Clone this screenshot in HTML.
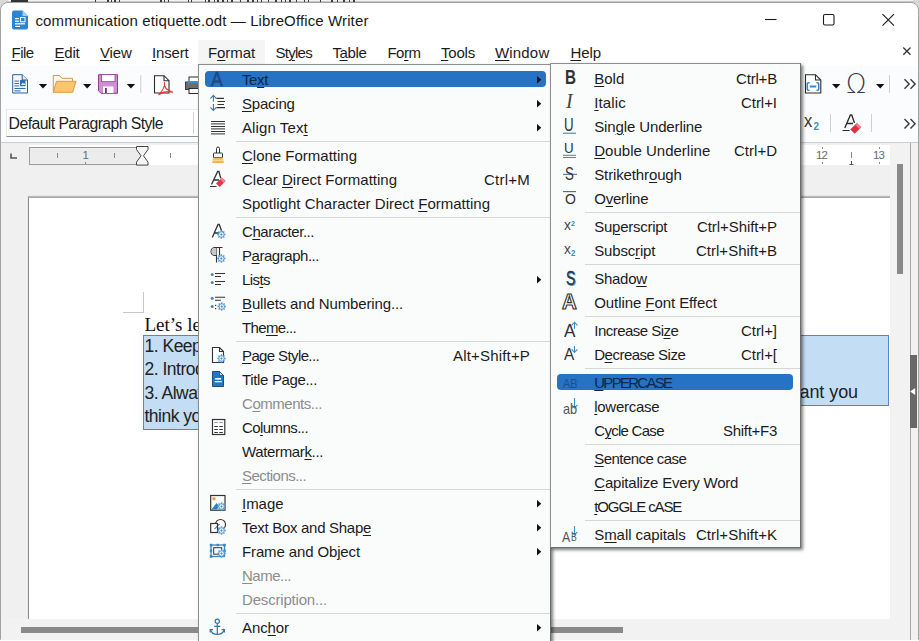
<!DOCTYPE html>
<html><head><meta charset="utf-8"><title>communication etiquette.odt — LibreOffice Writer</title>
<style>
html,body{margin:0;padding:0;}
body{width:919px;height:641px;overflow:hidden;position:relative;background:#fff;font-family:"Liberation Sans",sans-serif;}
.t{position:absolute;white-space:pre;display:inline-block;}
.t u{text-decoration:underline;text-decoration-thickness:1px;text-underline-offset:2px;}
svg{position:absolute;left:0;top:0;overflow:visible}
#win{position:absolute;left:0;top:2px;width:919px;height:638px;box-sizing:border-box;border:1px solid #a2a2a2;border-radius:8px 8px 0 0;background:#fff;overflow:hidden}
</style></head><body>

<div style="position:absolute;left:0px;top:0px;width:919px;height:10px;background:#d9d9d9;"></div>
<div style="position:absolute;left:8px;top:0px;width:905px;height:2px;background:#f4f4f4;"></div>
<div style="position:absolute;left:6px;top:1px;width:909px;height:1px;background:#c8c8c8;"></div>
<div style="position:absolute;left:11px;top:0px;width:17px;height:2px;background:#333;"></div>
<div style="position:absolute;left:95px;top:0px;width:1px;height:2px;background:#3a3a3a;"></div>
<div style="position:absolute;left:107px;top:0px;width:2px;height:2px;background:#3a3a3a;"></div>
<div style="position:absolute;left:111px;top:0px;width:1px;height:2px;background:#3a3a3a;"></div>
<div style="position:absolute;left:114px;top:0px;width:2px;height:2px;background:#3a3a3a;"></div>
<div style="position:absolute;left:119px;top:0px;width:1px;height:2px;background:#3a3a3a;"></div>
<div style="position:absolute;left:160px;top:0px;width:2px;height:2px;background:#3a3a3a;"></div>
<div style="position:absolute;left:164px;top:0px;width:1px;height:2px;background:#3a3a3a;"></div>
<div style="position:absolute;left:168px;top:0px;width:1px;height:2px;background:#3a3a3a;"></div>
<div style="position:absolute;left:188px;top:0px;width:1px;height:2px;background:#3a3a3a;"></div>
<div style="position:absolute;left:191px;top:0px;width:1px;height:2px;background:#3a3a3a;"></div>
<div style="position:absolute;left:205px;top:0px;width:1px;height:2px;background:#3a3a3a;"></div>
<div style="position:absolute;left:208px;top:0px;width:2px;height:2px;background:#3a3a3a;"></div>
<div style="position:absolute;left:214px;top:0px;width:1px;height:2px;background:#3a3a3a;"></div>
<div style="position:absolute;left:217px;top:0px;width:2px;height:2px;background:#3a3a3a;"></div>
<div style="position:absolute;left:222px;top:0px;width:2px;height:2px;background:#3a3a3a;"></div>
<div style="position:absolute;left:227px;top:0px;width:1px;height:2px;background:#3a3a3a;"></div>
<div style="position:absolute;left:231px;top:0px;width:2px;height:2px;background:#3a3a3a;"></div>
<div style="position:absolute;left:240px;top:0px;width:1px;height:2px;background:#3a3a3a;"></div>
<div style="position:absolute;left:247px;top:0px;width:2px;height:2px;background:#3a3a3a;"></div>
<div style="position:absolute;left:252px;top:0px;width:2px;height:2px;background:#3a3a3a;"></div>
<div style="position:absolute;left:257px;top:0px;width:1px;height:2px;background:#3a3a3a;"></div>
<div style="position:absolute;left:261px;top:0px;width:1px;height:2px;background:#3a3a3a;"></div>
<div style="position:absolute;left:268px;top:0px;width:1px;height:2px;background:#3a3a3a;"></div>
<div style="position:absolute;left:275px;top:0px;width:2px;height:2px;background:#3a3a3a;"></div>
<div style="position:absolute;left:281px;top:0px;width:1px;height:2px;background:#3a3a3a;"></div>
<div style="position:absolute;left:285px;top:0px;width:1px;height:2px;background:#3a3a3a;"></div>
<div style="position:absolute;left:289px;top:0px;width:2px;height:2px;background:#3a3a3a;"></div>
<div style="position:absolute;left:296px;top:0px;width:1px;height:2px;background:#3a3a3a;"></div>
<div style="position:absolute;left:304px;top:0px;width:1px;height:2px;background:#3a3a3a;"></div>
<div style="position:absolute;left:308px;top:0px;width:1px;height:2px;background:#3a3a3a;"></div>
<div style="position:absolute;left:320px;top:0px;width:1px;height:2px;background:#3a3a3a;"></div>
<div style="position:absolute;left:331px;top:0px;width:2px;height:2px;background:#3a3a3a;"></div>
<div style="position:absolute;left:337px;top:0px;width:1px;height:2px;background:#3a3a3a;"></div>
<div style="position:absolute;left:343px;top:0px;width:2px;height:2px;background:#3a3a3a;"></div>
<div style="position:absolute;left:349px;top:0px;width:1px;height:2px;background:#3a3a3a;"></div>
<div style="position:absolute;left:353px;top:0px;width:2px;height:2px;background:#3a3a3a;"></div>
<div id="win"></div>
<span class="t" id="t1" style="left:35.5px;top:10.30px;font:normal 400 15px/21px 'Liberation Sans',sans-serif;color:#1a1a1a;letter-spacing:0.123px;">communication etiquette.odt — LibreOffice Writer</span>
<div style="position:absolute;left:198px;top:40px;width:67px;height:25px;background:#f5f5f5;"></div>
<span class="t" id="t2" style="left:11.5px;top:41.90px;font:normal 400 15px/21px 'Liberation Sans',sans-serif;color:#1c1c1c;letter-spacing:-0.547px;"><u>F</u>ile</span>
<span class="t" id="t3" style="left:54.4px;top:41.90px;font:normal 400 15px/21px 'Liberation Sans',sans-serif;color:#1c1c1c;letter-spacing:-0.165px;"><u>E</u>dit</span>
<span class="t" id="t4" style="left:100px;top:41.90px;font:normal 400 15px/21px 'Liberation Sans',sans-serif;color:#1c1c1c;letter-spacing:-0.163px;"><u>V</u>iew</span>
<span class="t" id="t5" style="left:152px;top:41.90px;font:normal 400 15px/21px 'Liberation Sans',sans-serif;color:#1c1c1c;letter-spacing:-0.172px;"><u>I</u>nsert</span>
<span class="t" id="t6" style="left:208px;top:41.90px;font:normal 400 15px/21px 'Liberation Sans',sans-serif;color:#1c1c1c;letter-spacing:-0.086px;">F<u>o</u>rmat</span>
<span class="t" id="t7" style="left:275.4px;top:41.90px;font:normal 400 15px/21px 'Liberation Sans',sans-serif;color:#1c1c1c;letter-spacing:-0.712px;">St<u>y</u>les</span>
<span class="t" id="t8" style="left:332.4px;top:41.90px;font:normal 400 15px/21px 'Liberation Sans',sans-serif;color:#1c1c1c;letter-spacing:-0.355px;">T<u>a</u>ble</span>
<span class="t" id="t9" style="left:387.4px;top:41.90px;font:normal 400 15px/21px 'Liberation Sans',sans-serif;color:#1c1c1c;letter-spacing:-0.504px;">Fo<u>r</u>m</span>
<span class="t" id="t10" style="left:441px;top:41.90px;font:normal 400 15px/21px 'Liberation Sans',sans-serif;color:#1c1c1c;letter-spacing:-0.206px;"><u>T</u>ools</span>
<span class="t" id="t11" style="left:495px;top:41.90px;font:normal 400 15px/21px 'Liberation Sans',sans-serif;color:#1c1c1c;letter-spacing:0.171px;"><u>W</u>indow</span>
<span class="t" id="t12" style="left:570.4px;top:41.90px;font:normal 400 15px/21px 'Liberation Sans',sans-serif;color:#1c1c1c;letter-spacing:-0.069px;"><u>H</u>elp</span>
<div style="position:absolute;left:1px;top:66px;width:917px;height:77px;background:#fbfcfd;"></div>
<div style="position:absolute;left:1px;top:142px;width:917px;height:1px;background:#cdcdcd;"></div>
<div style="position:absolute;left:6px;top:109px;width:194px;height:27.5px;background:#fff;border-bottom:1px solid #8f8f8f;border-left:1px solid #e6e6e6;border-top:1px solid #ececec;box-sizing:border-box;"></div>
<div style="position:absolute;left:193px;top:112px;width:1px;height:22px;background:#d0d0d0;"></div>
<span class="t" id="t13" style="left:8.6px;top:113.13px;font:normal 400 15.8px/22px 'Liberation Sans',sans-serif;color:#1c1c1c;letter-spacing:-0.579px;">Default Paragraph Style</span>
<div style="position:absolute;left:1px;top:143px;width:909px;height:497px;background:#f0f0f0;"></div>
<div style="position:absolute;left:29px;top:145px;width:861px;height:20px;background:#fff;"></div>
<div style="position:absolute;left:29px;top:147px;width:114px;height:18px;background:#ececec;border:1px solid #9a9a9a;box-sizing:border-box;"></div>
<span class="t" id="t14" style="left:82.5px;top:147.02px;font:normal 400 11.5px/16px 'Liberation Sans',sans-serif;color:#6a6a6a;letter-spacing:-0.406px;">1</span>
<span class="t" id="t15" style="left:816px;top:147.02px;font:normal 400 11.5px/16px 'Liberation Sans',sans-serif;color:#6a6a6a;letter-spacing:-0.898px;">12</span>
<span class="t" id="t16" style="left:873px;top:147.02px;font:normal 400 11.5px/16px 'Liberation Sans',sans-serif;color:#6a6a6a;letter-spacing:-0.898px;">13</span>
<div style="position:absolute;left:28px;top:197px;width:862px;height:422px;background:#fff;border-left:1px solid #8c8c8c;border-top:1px solid #a8a8a8;box-sizing:border-box;box-shadow:0 -1px 1px rgba(0,0,0,.22);"></div>
<div style="position:absolute;left:123px;top:312px;width:21px;height:1px;background:#c8c8c8;"></div>
<div style="position:absolute;left:143px;top:292px;width:1px;height:21px;background:#c8c8c8;"></div>
<div style="position:absolute;left:143px;top:335px;width:746px;height:71px;background:#c3ddf4;border:1px solid #5686bd;box-sizing:border-box;border-bottom:none"></div>
<div style="position:absolute;left:143px;top:405px;width:500px;height:25px;background:#c3ddf4;border:1px solid #5686bd;box-sizing:border-box;border-top:none"></div>
<div style="position:absolute;left:642px;top:405px;width:247px;height:1px;background:#5686bd;"></div>
<span class="t" id="t17" style="left:144.5px;top:311.09px;font:normal 400 19px/27px 'Liberation Serif',serif;color:#111;letter-spacing:0.000px;">Let’s learn about communication etiquette</span>
<span class="t" id="t18" style="left:144.5px;top:333.94px;font:normal 400 17.5px/24px 'Liberation Sans',sans-serif;color:#222;letter-spacing:0.000px;letter-spacing:-0.5px;">1. Keep your message short and clear</span>
<span class="t" id="t19" style="left:144.5px;top:357.24px;font:normal 400 17.5px/24px 'Liberation Sans',sans-serif;color:#222;letter-spacing:0.000px;letter-spacing:-0.5px;">2. Introduce yourself at the beginning</span>
<span class="t" id="t20" style="left:144.5px;top:381.14px;font:normal 400 17.5px/24px 'Liberation Sans',sans-serif;color:#222;letter-spacing:0.000px;letter-spacing:-0.5px;">3. Always</span>
<span class="t" id="t21" style="left:799.5px;top:380.46px;font:normal 400 18px/25px 'Liberation Sans',sans-serif;color:#222;letter-spacing:-0.078px;">ant you</span>
<span class="t" id="t22" style="left:144.5px;top:404.14px;font:normal 400 17.5px/24px 'Liberation Sans',sans-serif;color:#222;letter-spacing:0.000px;letter-spacing:-0.5px;">think you should</span>
<div style="position:absolute;left:890px;top:143px;width:20px;height:477px;background:#f2f2f2;"></div>
<div style="position:absolute;left:897px;top:164px;width:6px;height:110px;background:#8a8a8a;"></div>
<div style="position:absolute;left:1px;top:619px;width:909px;height:21px;background:#f2f2f2;"></div>
<div style="position:absolute;left:21px;top:627px;width:601.5px;height:5.6px;background:#8a8a8a;"></div>
<div style="position:absolute;left:910px;top:143px;width:1px;height:497px;background:#a9a9a9;"></div>
<div style="position:absolute;left:911px;top:143px;width:7px;height:497px;background:#f1f1f1;"></div>
<div style="position:absolute;left:910px;top:355px;width:7px;height:73px;background:#686868;"></div>
<svg width="919" height="641" viewBox="0 0 919 641">
<path d="M14 10.5h8.5l5.5 5.5v11.5a2 2 0 0 1-2 2h-12a2 2 0 0 1-2-2v-15a2 2 0 0 1 2-2z" fill="#2a85d0"/><path d="M22.5 10.5l5.500 5.500h-5.500z" fill="#9fd0f5"/>
<g fill="#fff"><rect x="15" y="18" width="4" height="1.2"/><rect x="15" y="20.6" width="4" height="1.2"/><rect x="15" y="23.2" width="10" height="1.2"/><rect x="15" y="25.8" width="5" height="1.2"/><rect x="20.5" y="17.5" width="4.500" height="4.300" fill="none" stroke="#fff" stroke-width="1"/></g>
<g stroke="#1a1a1a" stroke-width="1.1" fill="none"><path d="M765 19.5h11.500"/><rect x="823.5" y="14.5" width="10.5" height="10.5" rx="1.5"/><path d="M882.5 14.200l11.500 11.500M894 14.200l-11.500 11.500"/></g>
<path d="M903.300 47.500l7.200 7.200M910.500 47.500l-7.200 7.200" stroke="#333" stroke-width="1.300" fill="none"/>
<path d="M12.700 74.700h9.500l5.300 5.300v13h-14.800z" fill="#f2f8fd" stroke="#2d5f9e" stroke-width="1"/><path d="M22.200 74.700v5.300h5.300" fill="#dcecf9" stroke="#2d5f9e" stroke-width="1"/>
<g fill="#2d6fb5"><rect x="14.500" y="80.600" width="4.500" height="1"/><rect x="14.500" y="83" width="4.500" height="1"/><rect x="14.500" y="85.400" width="4.500" height="1"/><rect x="14.500" y="88" width="11" height="1"/><rect x="14.500" y="90.400" width="6" height="1"/><rect x="20" y="80" width="5.500" height="6.200"/></g><path d="M21 85l1.800-2.500l1 1.200l0.800-0.800l0.500 2.100z" fill="#d7ebfa"/>
<path d="M38.8 84h8.400l-4.200 4.500z" fill="#111"/>
<path d="M83 84h8.400l-4.200 4.500z" fill="#111"/>
<path d="M126.7 84h8.400l-4.200 4.500z" fill="#111"/>
<path d="M832 84h8.400l-4.200 4.500z" fill="#111"/>
<path d="M876 84h8.400l-4.200 4.500z" fill="#111"/>
<path d="M53.300 92.300v-16.800h6.200l2.400 2.800h10.600v3" fill="#fff6e6" stroke="#c99a62" stroke-width="1"/><path d="M53.300 92.300l3.200-11h19.500l-3.300 11z" fill="#f9c86c" stroke="#d79a4a" stroke-width="1"/>
<path d="M98.500 74.700h19v18.600h-16.500l-2.500-2.500z" fill="#d390d1" stroke="#8c3f8e" stroke-width="1"/><rect x="101.500" y="74.700" width="13.500" height="7" fill="#fff" stroke="#8c3f8e" stroke-width="0.800"/><rect x="103" y="86.500" width="10.500" height="6.500" fill="#fff"/><rect x="105" y="88" width="1.800" height="5" fill="#6d2c6f"/>
<path d="M140.800 75v18M889.500 75v18M830.500 114v18M871.500 114v18" stroke="#cfcfcf" stroke-width="1"/>
<path d="M154.500 75.700h9.500l5 5v12.300h-14.500z" fill="#fff" stroke="#2b2b2b" stroke-width="1.100"/><path d="M164 75.700v5h5" fill="none" stroke="#2b2b2b" stroke-width="1.100"/>
<path d="M164.500 82.500c0.900 3.500-1 7-5.700 12.200M164.500 82.500c-0.700 4 2.200 7.800 8 9.600M158.800 94.700c3.500-2.600 8.500-3.600 13.700-2.600" fill="none" stroke="#e03a3a" stroke-width="1.100" stroke-linecap="round"/>
<rect x="189" y="77" width="12" height="7" fill="#fff" stroke="#2b2b2b"/><rect x="185.500" y="82" width="16" height="7.500" fill="#6d6d6d" stroke="#3a3a3a"/><rect x="187.500" y="81" width="13" height="2.200" fill="#3a8dd6"/><rect x="189" y="88.500" width="12" height="5" fill="#fff" stroke="#2b2b2b"/>
<path d="M805.500 74.700h10l5.300 5.300v13h-15.300z" fill="#fff" stroke="#2b2b2b" stroke-width="1.100"/><path d="M815.500 74.700v5.300h5.300" fill="none" stroke="#2b2b2b" stroke-width="1.100"/><path d="M809.500 82.800h-1.200a1 1 0 0 0-1 1v5.400a1 1 0 0 0 1 1h1.200M816.500 82.800h1.200a1 1 0 0 1 1 1v5.400a1 1 0 0 1-1 1h-1.200" fill="none" stroke="#2f86d1" stroke-width="1.500"/><rect x="809.800" y="85.500" width="6.400" height="2" fill="#2f86d1"/>
<path d="M904.500 79.2l4.600 4.800l-4.600 4.800M910.500 79.2l4.600 4.800l-4.600 4.800" fill="none" stroke="#3a3a3a" stroke-width="1.400"/>
<path d="M904.500 119l4.600 4.800l-4.600 4.800M910.500 119l4.600 4.800l-4.600 4.800" fill="none" stroke="#3a3a3a" stroke-width="1.400"/>
<path d="M844.800 128l5.600-13h1.300l2.800 8M847.200 123.500h5.800" fill="none" stroke="#2b2b2b" stroke-width="1.300"/><path d="M842.500 130.500h7" stroke="#2b2b2b" stroke-width="1"/><path d="M850.300 129.500l6.500-6.500l4.400 4.300l-6.500 6.500z" fill="#e0303f"/><path d="M855 124.800l1.800-1.800l4.400 4.300l-1.800 1.800z" fill="#ee7a85"/>
<g stroke="#8a8a8a" stroke-width="1"><path d="M57.500 153v5M114.500 153v5M170.500 153v5"/><path d="M822.500 147v2M822.500 162v2M879.500 147v2M879.500 162v2M85.500 162v2"/><path d="M851.500 152v6"/><path d="M851.500 161v4M849.500 164.500h4" stroke="#555"/></g>
<path d="M11 153.500v4.500h6" fill="none" stroke="#555" stroke-width="1.600"/>
<path d="M136.500 146.500h11.500v3l-4.500 6.300l4.500 6.300v3h-11.500v-3l4.500-6.300l-4.500-6.300z" fill="#f4f4f4" stroke="#444" stroke-width="1"/>
<path d="M915.200 388l-5 3.500l5 3.500z" fill="#fff"/>
</svg>
<span class="t" id="t23" style="left:846.3px;top:65.24px;font:normal 200 27px/38px 'Liberation Sans',sans-serif;color:#3a3a3a;letter-spacing:0.000px;font-family:'DejaVu Sans Light','DejaVu Sans',sans-serif;transform:scaleX(0.98);transform-origin:0 0;">Ω</span>
<span class="t" id="t24" style="left:804px;top:109.06px;font:normal 400 18px/25px 'Liberation Sans',sans-serif;color:#333;letter-spacing:0.000px;transform:scaleX(0.92);transform-origin:0 0;">x</span>
<span class="t" id="t25" style="left:813.5px;top:120.34px;font:normal 700 10px/14px 'Liberation Sans',sans-serif;color:#3f8dc4;letter-spacing:0.000px;">2</span>
<div style="position:absolute;left:198px;top:64px;width:353px;height:600px;box-sizing:border-box;background:#fafbfb;border:1px solid #8e8e8e;border-right-color:#6c6c6c;border-bottom-color:#6c6c6c;box-shadow:2px 2px 3px rgba(0,0,0,.5);"></div>
<div style="position:absolute;left:204.6px;top:71px;width:341.0px;height:15.5px;background:#2672c4;border-radius:4px;"></div>
<span class="t" id="t26" style="left:242px;top:69.05px;font:normal 400 15px/21px 'Liberation Sans',sans-serif;color:#0f2646;letter-spacing:-0.379px;">Te<u>x</u>t</span>
<svg width="919" height="641"><path d="M537 75.9l4.300 3.800l-4.300 3.800z" fill="#111"/></svg>
<span class="t" id="t27" style="left:242px;top:93.05px;font:normal 400 15px/21px 'Liberation Sans',sans-serif;color:#1c1c1c;letter-spacing:-0.210px;"><u>S</u>pacing</span>
<svg width="919" height="641"><path d="M537 99.9l4.300 3.800l-4.300 3.800z" fill="#111"/></svg>
<span class="t" id="t28" style="left:242px;top:117.05px;font:normal 400 15px/21px 'Liberation Sans',sans-serif;color:#1c1c1c;letter-spacing:0.098px;">Align Tex<u>t</u></span>
<svg width="919" height="641"><path d="M537 123.9l4.300 3.800l-4.300 3.800z" fill="#111"/></svg>
<div style="position:absolute;left:236px;top:141px;width:314px;height:1px;background:#d6d6d6;"></div>
<span class="t" id="t29" style="left:242px;top:145.05px;font:normal 400 15px/21px 'Liberation Sans',sans-serif;color:#1c1c1c;letter-spacing:-0.004px;"><u>C</u>lone Formatting</span>
<span class="t" id="t30" style="left:242px;top:169.05px;font:normal 400 15px/21px 'Liberation Sans',sans-serif;color:#1c1c1c;letter-spacing:-0.003px;">Clear <u>D</u>irect Formatting</span>
<span class="t" id="t31" style="left:484px;top:169.05px;font:normal 400 15px/21px 'Liberation Sans',sans-serif;color:#1c1c1c;letter-spacing:0.234px;">Ctrl+M</span>
<span class="t" id="t32" style="left:242px;top:193.05px;font:normal 400 15px/21px 'Liberation Sans',sans-serif;color:#1c1c1c;letter-spacing:0.011px;">Spotlight Character Direct <u>F</u>ormatting</span>
<div style="position:absolute;left:236px;top:217px;width:314px;height:1px;background:#d6d6d6;"></div>
<span class="t" id="t33" style="left:242px;top:221.05px;font:normal 400 15px/21px 'Liberation Sans',sans-serif;color:#1c1c1c;letter-spacing:-0.462px;">C<u>h</u>aracter...</span>
<span class="t" id="t34" style="left:242px;top:245.05px;font:normal 400 15px/21px 'Liberation Sans',sans-serif;color:#1c1c1c;letter-spacing:-0.465px;">P<u>a</u>ragraph...</span>
<span class="t" id="t35" style="left:242px;top:269.05px;font:normal 400 15px/21px 'Liberation Sans',sans-serif;color:#1c1c1c;letter-spacing:-0.572px;">Lis<u>t</u>s</span>
<svg width="919" height="641"><path d="M537 275.9l4.300 3.800l-4.300 3.800z" fill="#111"/></svg>
<span class="t" id="t36" style="left:242px;top:293.05px;font:normal 400 15px/21px 'Liberation Sans',sans-serif;color:#1c1c1c;letter-spacing:-0.136px;"><u>B</u>ullets and Numbering...</span>
<span class="t" id="t37" style="left:242px;top:317.05px;font:normal 400 15px/21px 'Liberation Sans',sans-serif;color:#1c1c1c;letter-spacing:-0.652px;">The<u>m</u>e...</span>
<div style="position:absolute;left:236px;top:341px;width:314px;height:1px;background:#d6d6d6;"></div>
<span class="t" id="t38" style="left:242px;top:345.05px;font:normal 400 15px/21px 'Liberation Sans',sans-serif;color:#1c1c1c;letter-spacing:-0.620px;"><u>P</u>age Style...</span>
<span class="t" id="t39" style="left:453px;top:345.05px;font:normal 400 15px/21px 'Liberation Sans',sans-serif;color:#1c1c1c;letter-spacing:0.178px;">Alt+Shift+P</span>
<span class="t" id="t40" style="left:242px;top:369.05px;font:normal 400 15px/21px 'Liberation Sans',sans-serif;color:#1c1c1c;letter-spacing:-0.345px;">Title Page...</span>
<span class="t" id="t41" style="left:242px;top:393.05px;font:normal 400 15px/21px 'Liberation Sans',sans-serif;color:#8d8d8d;letter-spacing:-0.459px;">C<u>o</u>mments...</span>
<span class="t" id="t42" style="left:242px;top:417.05px;font:normal 400 15px/21px 'Liberation Sans',sans-serif;color:#1c1c1c;letter-spacing:-0.572px;">Co<u>l</u>umns...</span>
<span class="t" id="t43" style="left:242px;top:441.05px;font:normal 400 15px/21px 'Liberation Sans',sans-serif;color:#1c1c1c;letter-spacing:-0.358px;">Watermar<u>k</u>...</span>
<span class="t" id="t44" style="left:242px;top:465.05px;font:normal 400 15px/21px 'Liberation Sans',sans-serif;color:#8d8d8d;letter-spacing:-0.550px;"><u>S</u>ections...</span>
<div style="position:absolute;left:236px;top:489px;width:314px;height:1px;background:#d6d6d6;"></div>
<span class="t" id="t45" style="left:242px;top:493.05px;font:normal 400 15px/21px 'Liberation Sans',sans-serif;color:#1c1c1c;letter-spacing:-0.041px;"><u>I</u>mage</span>
<svg width="919" height="641"><path d="M537 499.9l4.300 3.800l-4.300 3.800z" fill="#111"/></svg>
<span class="t" id="t46" style="left:242px;top:517.05px;font:normal 400 15px/21px 'Liberation Sans',sans-serif;color:#1c1c1c;letter-spacing:-0.293px;">Text Box and Shap<u>e</u></span>
<svg width="919" height="641"><path d="M537 523.9l4.300 3.800l-4.300 3.800z" fill="#111"/></svg>
<span class="t" id="t47" style="left:242px;top:541.05px;font:normal 400 15px/21px 'Liberation Sans',sans-serif;color:#1c1c1c;letter-spacing:-0.130px;">Frame and Ob<u>j</u>ect</span>
<svg width="919" height="641"><path d="M537 547.9l4.300 3.800l-4.300 3.800z" fill="#111"/></svg>
<span class="t" id="t48" style="left:242px;top:565.05px;font:normal 400 15px/21px 'Liberation Sans',sans-serif;color:#8d8d8d;letter-spacing:-0.504px;"><u>N</u>ame...</span>
<span class="t" id="t49" style="left:242px;top:589.05px;font:normal 400 15px/21px 'Liberation Sans',sans-serif;color:#8d8d8d;letter-spacing:-0.182px;">Description...</span>
<div style="position:absolute;left:236px;top:613px;width:314px;height:1px;background:#d6d6d6;"></div>
<span class="t" id="t50" style="left:242px;top:617.05px;font:normal 400 15px/21px 'Liberation Sans',sans-serif;color:#1c1c1c;letter-spacing:-0.091px;">Anc<u>h</u>or</span>
<svg width="919" height="641"><path d="M537 623.9l4.300 3.800l-4.300 3.800z" fill="#111"/></svg>
<div style="position:absolute;left:550px;top:63px;width:251px;height:485px;box-sizing:border-box;background:#fafbfb;border:1px solid #8e8e8e;border-right-color:#6c6c6c;border-bottom-color:#6c6c6c;box-shadow:2px 2px 3px rgba(0,0,0,.5);"></div>
<span class="t" id="t51" style="left:594.25px;top:68.05px;font:normal 400 15px/21px 'Liberation Sans',sans-serif;color:#1c1c1c;letter-spacing:-0.012px;"><u>B</u>old</span>
<span class="t" id="t52" style="left:736px;top:68.05px;font:normal 400 15px/21px 'Liberation Sans',sans-serif;color:#1c1c1c;letter-spacing:-0.182px;">Ctrl+B</span>
<span class="t" id="t53" style="left:594.25px;top:92.05px;font:normal 400 15px/21px 'Liberation Sans',sans-serif;color:#1c1c1c;letter-spacing:0.107px;"><u>I</u>talic</span>
<span class="t" id="t54" style="left:741px;top:92.05px;font:normal 400 15px/21px 'Liberation Sans',sans-serif;color:#1c1c1c;letter-spacing:-0.044px;">Ctrl+I</span>
<span class="t" id="t55" style="left:594.25px;top:116.05px;font:normal 400 15px/21px 'Liberation Sans',sans-serif;color:#1c1c1c;letter-spacing:-0.130px;">Sin<u>g</u>le Underline</span>
<span class="t" id="t56" style="left:594.25px;top:140.05px;font:normal 400 15px/21px 'Liberation Sans',sans-serif;color:#1c1c1c;letter-spacing:0.005px;"><u>D</u>ouble Underline</span>
<span class="t" id="t57" style="left:734px;top:140.05px;font:normal 400 15px/21px 'Liberation Sans',sans-serif;color:#1c1c1c;letter-spacing:0.013px;">Ctrl+D</span>
<span class="t" id="t58" style="left:594.25px;top:164.05px;font:normal 400 15px/21px 'Liberation Sans',sans-serif;color:#1c1c1c;letter-spacing:-0.133px;">Strikethr<u>o</u>ugh</span>
<span class="t" id="t59" style="left:594.25px;top:188.05px;font:normal 400 15px/21px 'Liberation Sans',sans-serif;color:#1c1c1c;letter-spacing:-0.232px;">O<u>v</u>erline</span>
<div style="position:absolute;left:585px;top:212px;width:215px;height:1px;background:#d6d6d6;"></div>
<span class="t" id="t60" style="left:594.25px;top:216.05px;font:normal 400 15px/21px 'Liberation Sans',sans-serif;color:#1c1c1c;letter-spacing:-0.263px;">Su<u>p</u>erscript</span>
<span class="t" id="t61" style="left:697px;top:216.05px;font:normal 400 15px/21px 'Liberation Sans',sans-serif;color:#1c1c1c;letter-spacing:-0.073px;">Ctrl+Shift+P</span>
<span class="t" id="t62" style="left:594.25px;top:240.05px;font:normal 400 15px/21px 'Liberation Sans',sans-serif;color:#1c1c1c;letter-spacing:-0.172px;">Subsc<u>r</u>ipt</span>
<span class="t" id="t63" style="left:696px;top:240.05px;font:normal 400 15px/21px 'Liberation Sans',sans-serif;color:#1c1c1c;letter-spacing:0.010px;">Ctrl+Shift+B</span>
<div style="position:absolute;left:585px;top:264px;width:215px;height:1px;background:#d6d6d6;"></div>
<span class="t" id="t64" style="left:594.25px;top:268.05px;font:normal 400 15px/21px 'Liberation Sans',sans-serif;color:#1c1c1c;letter-spacing:-0.286px;">Shado<u>w</u></span>
<span class="t" id="t65" style="left:594.25px;top:292.05px;font:normal 400 15px/21px 'Liberation Sans',sans-serif;color:#1c1c1c;letter-spacing:-0.078px;">Outline <u>F</u>ont Effect</span>
<div style="position:absolute;left:585px;top:316px;width:215px;height:1px;background:#d6d6d6;"></div>
<span class="t" id="t66" style="left:594.25px;top:320.05px;font:normal 400 15px/21px 'Liberation Sans',sans-serif;color:#1c1c1c;letter-spacing:-0.530px;">Increase Si<u>z</u>e</span>
<span class="t" id="t67" style="left:741px;top:320.05px;font:normal 400 15px/21px 'Liberation Sans',sans-serif;color:#1c1c1c;letter-spacing:-0.044px;">Ctrl+]</span>
<span class="t" id="t68" style="left:594.25px;top:344.05px;font:normal 400 15px/21px 'Liberation Sans',sans-serif;color:#1c1c1c;letter-spacing:-0.505px;">D<u>e</u>crease Size</span>
<span class="t" id="t69" style="left:741px;top:344.05px;font:normal 400 15px/21px 'Liberation Sans',sans-serif;color:#1c1c1c;letter-spacing:-0.044px;">Ctrl+[</span>
<div style="position:absolute;left:585px;top:368px;width:215px;height:1px;background:#d6d6d6;"></div>
<div style="position:absolute;left:556.8px;top:374px;width:236.70000000000005px;height:15.5px;background:#2672c4;border-radius:4px;"></div>
<span class="t" id="t70" style="left:594.25px;top:372.05px;font:normal 400 15px/21px 'Liberation Sans',sans-serif;color:#0f2646;letter-spacing:-1.727px;"><u>U</u>PPERCASE</span>
<span class="t" id="t71" style="left:594.25px;top:396.05px;font:normal 400 15px/21px 'Liberation Sans',sans-serif;color:#1c1c1c;letter-spacing:-0.283px;"><u>l</u>owercase</span>
<span class="t" id="t72" style="left:594.25px;top:420.05px;font:normal 400 15px/21px 'Liberation Sans',sans-serif;color:#1c1c1c;letter-spacing:-0.720px;">C<u>y</u>cle Case</span>
<span class="t" id="t73" style="left:723px;top:420.05px;font:normal 400 15px/21px 'Liberation Sans',sans-serif;color:#1c1c1c;letter-spacing:-0.285px;">Shift+F3</span>
<div style="position:absolute;left:585px;top:444px;width:215px;height:1px;background:#d6d6d6;"></div>
<span class="t" id="t74" style="left:594.25px;top:448.05px;font:normal 400 15px/21px 'Liberation Sans',sans-serif;color:#1c1c1c;letter-spacing:-0.558px;"><u>S</u>entence case</span>
<span class="t" id="t75" style="left:594.25px;top:472.05px;font:normal 400 15px/21px 'Liberation Sans',sans-serif;color:#1c1c1c;letter-spacing:-0.196px;"><u>C</u>apitalize Every Word</span>
<span class="t" id="t76" style="left:594.25px;top:496.05px;font:normal 400 15px/21px 'Liberation Sans',sans-serif;color:#1c1c1c;letter-spacing:-1.111px;"><u>t</u>OGGLE cASE</span>
<div style="position:absolute;left:585px;top:520px;width:215px;height:1px;background:#d6d6d6;"></div>
<span class="t" id="t77" style="left:594.25px;top:524.05px;font:normal 400 15px/21px 'Liberation Sans',sans-serif;color:#1c1c1c;letter-spacing:-0.076px;">S<u>m</u>all capitals</span>
<span class="t" id="t78" style="left:696px;top:524.05px;font:normal 400 15px/21px 'Liberation Sans',sans-serif;color:#1c1c1c;letter-spacing:0.010px;">Ctrl+Shift+K</span>
<svg width="919" height="641" viewBox="0 0 919 641">
<path d="M213.400 95.500v6.200M213.400 104v6.400M210.400 98.600l3-3.200l3 3.200M210.400 107.300l3 3.200l3-3.200" fill="none" stroke="#3b7db0" stroke-width="1.100"/>
<path d="M216.500 98.400h7.500M217.500 101.500h7.500M217.500 104.500h6.500M216.500 107.600h8.500" stroke="#333" stroke-width="1.100"/>
<path d="M211 121.500h14M211 123.900h14M211 126.500h14M211 128.900h14M211 131.500h14M211 133.900h14" stroke="#333" stroke-width="1"/>
<path d="M216.500 153v-4.500a1.500 1.500 0 0 1 3 0v4.500" fill="#fff" stroke="#333" stroke-width="1"/>
<rect x="213.500" y="153" width="9" height="4.800" rx="0.800" fill="#fff" stroke="#333" stroke-width="1"/>
<path d="M213 158.300h10l0.800 4.700h-11.600z" fill="#f5b24d"/><rect x="213" y="159.600" width="10" height="1.200" fill="#fbdca6"/>
<path d="M211.500 184.500l6.200-13h1.200l1.800 6.500M214 180h5" fill="none" stroke="#333" stroke-width="1.300"/><path d="M210 186.500h6.500" stroke="#333" stroke-width="1"/>
<path d="M216 183.500l5.800-6l3.700 3.600l-5.800 6z" fill="#e3364c"/><path d="M220 179.300l1.800-1.800l3.700 3.600l-1.800 1.800z" fill="#ef7f8d"/>
<path d="M212.300 237.500l5.700-13h1.200l3 8M214.500 233h4.500" fill="none" stroke="#333" stroke-width="1.300"/>
<path d="M225.54 233.76 L225.54 235.24 L224.39 235.24 L224.01 236.16 L224.82 236.97 L223.77 238.02 L222.96 237.21 L222.04 237.59 L222.04 238.74 L220.56 238.74 L220.56 237.59 L219.64 237.21 L218.83 238.02 L217.78 236.97 L218.59 236.16 L218.21 235.24 L217.06 235.24 L217.06 233.76 L218.21 233.76 L218.59 232.84 L217.78 232.03 L218.83 230.98 L219.64 231.79 L220.56 231.41 L220.56 230.26 L222.04 230.26 L222.04 231.41 L222.96 231.79 L223.77 230.98 L224.82 232.03 L224.01 232.84 L224.39 233.76Z" fill="#5a9fdb"/><circle cx="221.3" cy="234.5" r="2.24" fill="#eef7fe"/><path d="M221.3 233.21L222.59 234.5L221.3 235.79L220.01 234.5Z" fill="#3f8dd6"/>
<path d="M222.500 247.500h-7.500a4 4 0 0 0 0 8h1.500M216.500 247.500v15M219.500 247.500v8" fill="none" stroke="#333" stroke-width="1.100"/><path d="M216.500 248h-1.500a3.500 3.500 0 0 0 0 7h1.500z" fill="#c9c9c9"/>
<path d="M225.54 257.76 L225.54 259.24 L224.39 259.24 L224.01 260.16 L224.82 260.97 L223.77 262.02 L222.96 261.21 L222.04 261.59 L222.04 262.74 L220.56 262.74 L220.56 261.59 L219.64 261.21 L218.83 262.02 L217.78 260.97 L218.59 260.16 L218.21 259.24 L217.06 259.24 L217.06 257.76 L218.21 257.76 L218.59 256.84 L217.78 256.03 L218.83 254.98 L219.64 255.79 L220.56 255.41 L220.56 254.26 L222.04 254.26 L222.04 255.41 L222.96 255.79 L223.77 254.98 L224.82 256.03 L224.01 256.84 L224.39 257.76Z" fill="#5a9fdb"/><circle cx="221.3" cy="258.5" r="2.24" fill="#eef7fe"/><path d="M221.3 257.21L222.59 258.5L221.3 259.79L220.01 258.5Z" fill="#3f8dd6"/>
<circle cx="212.200" cy="274.5" r="1.500" fill="#4a86b8"/><path d="M215 273.5h10M215 276.5h6" stroke="#333" stroke-width="1.100"/>
<circle cx="212.200" cy="282.5" r="1.500" fill="#4a86b8"/><path d="M215 281.5h10M215 284.5h6" stroke="#333" stroke-width="1.100"/>
<circle cx="212.200" cy="298.200" r="1.500" fill="#4a86b8"/><path d="M215 297.300h10M215 300.300h6" stroke="#333" stroke-width="1.100"/>
<circle cx="212.200" cy="306.500" r="1.500" fill="#3f8f8a"/><rect x="215" y="304.800" width="1.200" height="1.200" fill="#333"/><rect x="215" y="308" width="1.200" height="1.200" fill="#333"/>
<path d="M225.94 305.76 L225.94 307.24 L224.79 307.24 L224.41 308.16 L225.22 308.97 L224.17 310.02 L223.36 309.21 L222.44 309.59 L222.44 310.74 L220.96 310.74 L220.96 309.59 L220.04 309.21 L219.23 310.02 L218.18 308.97 L218.99 308.16 L218.61 307.24 L217.46 307.24 L217.46 305.76 L218.61 305.76 L218.99 304.84 L218.18 304.03 L219.23 302.98 L220.04 303.79 L220.96 303.41 L220.96 302.26 L222.44 302.26 L222.44 303.41 L223.36 303.79 L224.17 302.98 L225.22 304.03 L224.41 304.84 L224.79 305.76Z" fill="#5a9fdb"/><circle cx="221.7" cy="306.5" r="2.24" fill="#eef7fe"/><path d="M221.7 305.21L222.99 306.5L221.7 307.79L220.41 306.5Z" fill="#3f8dd6"/>
<path d="M212.500 347.500h7l4 4v11h-11z" fill="#fff" stroke="#333" stroke-width="1.100"/><path d="M219.500 347.500v4h4" fill="none" stroke="#333" stroke-width="1.100"/>
<path d="M225.74 357.76 L225.74 359.24 L224.59 359.24 L224.21 360.16 L225.02 360.97 L223.97 362.02 L223.16 361.21 L222.24 361.59 L222.24 362.74 L220.76 362.74 L220.76 361.59 L219.84 361.21 L219.03 362.02 L217.98 360.97 L218.79 360.16 L218.41 359.24 L217.26 359.24 L217.26 357.76 L218.41 357.76 L218.79 356.84 L217.98 356.03 L219.03 354.98 L219.84 355.79 L220.76 355.41 L220.76 354.26 L222.24 354.26 L222.24 355.41 L223.16 355.79 L223.97 354.98 L225.02 356.03 L224.21 356.84 L224.59 357.76Z" fill="#5a9fdb"/><circle cx="221.5" cy="358.5" r="2.24" fill="#eef7fe"/><path d="M221.5 357.21L222.79 358.5L221.5 359.79L220.21 358.5Z" fill="#3f8dd6"/>
<path d="M212.500 371.500h7l4 4v11h-11z" fill="#2378c3" stroke="#1d4f80" stroke-width="1"/><path d="M219.500 371.500v4h4z" fill="#bfe0f7" stroke="#1d4f80" stroke-width="0.800"/><rect x="215.200" y="378" width="5.800" height="1.600" fill="#fff"/><rect x="214.600" y="381" width="7.200" height="1.300" fill="#fff"/>
<rect x="212.500" y="419.500" width="12.300" height="15" fill="#fff" stroke="#333" stroke-width="1.200"/>
<path d="M214.300 422.500h3.500M219.300 422.500h3.500" stroke="#7f9db8" stroke-width="1"/>
<path d="M214.300 426.500h3.500M219.300 426.500h3.500M214.300 429.500h3.500M219.300 429.500h3.500M214.300 432.500h3.500M219.300 432.500h3.500" stroke="#333" stroke-width="1"/>
<rect x="210.700" y="495.500" width="14.300" height="14.700" fill="#fff" stroke="#333" stroke-width="1.200"/><circle cx="214" cy="498.700" r="1.700" fill="#f09a3e"/><path d="M211.500 509.500l5-6.500l2.500 3l-2 3.500z" fill="#2f7fc6"/>
<path d="M225.74 505.76 L225.74 507.24 L224.59 507.24 L224.21 508.16 L225.02 508.97 L223.97 510.02 L223.16 509.21 L222.24 509.59 L222.24 510.74 L220.76 510.74 L220.76 509.59 L219.84 509.21 L219.03 510.02 L217.98 508.97 L218.79 508.16 L218.41 507.24 L217.26 507.24 L217.26 505.76 L218.41 505.76 L218.79 504.84 L217.98 504.03 L219.03 502.98 L219.84 503.79 L220.76 503.41 L220.76 502.26 L222.24 502.26 L222.24 503.41 L223.16 503.79 L223.97 502.98 L225.02 504.03 L224.21 504.84 L224.59 505.76Z" fill="#5a9fdb"/><circle cx="221.5" cy="506.5" r="2.24" fill="#eef7fe"/><path d="M221.5 505.21L222.79 506.5L221.5 507.79L220.21 506.5Z" fill="#3f8dd6"/>
<circle cx="220.500" cy="524.500" r="5" fill="#fff" stroke="#333" stroke-width="1.100"/><rect x="210.700" y="523.500" width="6.800" height="9" fill="#fff" stroke="#333" stroke-width="1.200"/><path d="M219.500 524l-5 5" stroke="#333" stroke-width="1"/>
<path d="M225.74 529.76 L225.74 531.24 L224.59 531.24 L224.21 532.16 L225.02 532.97 L223.97 534.02 L223.16 533.21 L222.24 533.59 L222.24 534.74 L220.76 534.74 L220.76 533.59 L219.84 533.21 L219.03 534.02 L217.98 532.97 L218.79 532.16 L218.41 531.24 L217.26 531.24 L217.26 529.76 L218.41 529.76 L218.79 528.84 L217.98 528.03 L219.03 526.98 L219.84 527.79 L220.76 527.41 L220.76 526.26 L222.24 526.26 L222.24 527.41 L223.16 527.79 L223.97 526.98 L225.02 528.03 L224.21 528.84 L224.59 529.76Z" fill="#5a9fdb"/><circle cx="221.5" cy="530.5" r="2.24" fill="#eef7fe"/><path d="M221.5 529.21L222.79 530.5L221.5 531.79L220.21 530.5Z" fill="#3f8dd6"/>
<rect x="211" y="545" width="13.500" height="11.500" fill="none" stroke="#3b86c0" stroke-width="1.300"/><g fill="#3b86c0"><rect x="209.800" y="543.800" width="2.600" height="2.600"/><rect x="223.200" y="543.800" width="2.600" height="2.600"/><rect x="209.800" y="555.200" width="2.600" height="2.600"/><rect x="216.500" y="543.800" width="2.400" height="2.400"/><rect x="209.800" y="549.500" width="2.400" height="2.400"/><rect x="223.400" y="549.500" width="2.400" height="2.400"/></g>
<rect x="213.700" y="547.700" width="8" height="6.500" fill="none" stroke="#333" stroke-width="1"/>
<path d="M225.74 552.76 L225.74 554.24 L224.59 554.24 L224.21 555.16 L225.02 555.97 L223.97 557.02 L223.16 556.21 L222.24 556.59 L222.24 557.74 L220.76 557.74 L220.76 556.59 L219.84 556.21 L219.03 557.02 L217.98 555.97 L218.79 555.16 L218.41 554.24 L217.26 554.24 L217.26 552.76 L218.41 552.76 L218.79 551.84 L217.98 551.03 L219.03 549.98 L219.84 550.79 L220.76 550.41 L220.76 549.26 L222.24 549.26 L222.24 550.41 L223.16 550.79 L223.97 549.98 L225.02 551.03 L224.21 551.84 L224.59 552.76Z" fill="#5a9fdb"/><circle cx="221.5" cy="553.5" r="2.24" fill="#eef7fe"/><path d="M221.5 552.21L222.79 553.5L221.5 554.79L220.21 553.5Z" fill="#3f8dd6"/>
<g fill="none" stroke="#2f76a8" stroke-width="1.200"><circle cx="217.300" cy="621.300" r="2.100"/><path d="M217.300 623.500v11M214.200 626.300h6.200M210.500 630c1 3 3.500 4.500 6.800 4.500s5.800-1.500 6.800-4.500"/><path d="M210.200 632.500v-2.800h2.800M224.400 632.500v-2.800h-2.800"/></g>
<path d="M563 133.200h13" stroke="#3f85b8" stroke-width="1.100"/><path d="M563 155.300h13M563 157.500h13" stroke="#3f85b8" stroke-width="1"/>
<path d="M563 174.300h14" stroke="#3a6a90" stroke-width="1"/><path d="M563 191.600h13" stroke="#3a6a90" stroke-width="1.100"/>
<path d="M574.5 328.8V322.2M571.6 325.3L574.5 322.2l2.900 3.100" fill="none" stroke="#3f8dc8" stroke-width="1.100"/>
<path d="M574.5 346V352.4M571.6 349.29999999999995L574.5 352.4l2.900-3.100" fill="none" stroke="#3f8dc8" stroke-width="1.100"/>
<path d="M574.5 398V408M571.6 404.9L574.5 408l2.900-3.100" fill="none" stroke="#3f8dc8" stroke-width="1.100"/>
<path d="M574.5 526V535M571.6 531.9L574.5 535l2.900-3.100" fill="none" stroke="#3f8dc8" stroke-width="1.100"/>
</svg>
<span class="t" id="t79" style="left:211.4px;top:65.07px;font:normal 400 20px/28px 'Liberation Sans',sans-serif;color:#1b4a86;letter-spacing:0.000px;-webkit-text-stroke:0.5px #1b4a86;transform:scaleX(0.88);transform-origin:0 0;">A</span>
<span class="t" id="t80" style="left:564.8px;top:64.44px;font:normal 700 19.5px/27px 'Liberation Sans',sans-serif;color:#333;letter-spacing:0.000px;transform:scaleX(0.78);transform-origin:0 0;">B</span>
<span class="t" id="t81" style="left:565.5px;top:87.31px;font:italic 400 21px/29px 'Liberation Serif',serif;color:#444;letter-spacing:0.000px;transform:scaleX(0.95);transform-origin:0 0;">I</span>
<span class="t" id="t82" style="left:564.3px;top:113.24px;font:normal 400 17.5px/24px 'Liberation Sans',sans-serif;color:#333;letter-spacing:0.000px;transform:scaleX(0.76);transform-origin:0 0;">U</span>
<span class="t" id="t83" style="left:564.3px;top:137.98px;font:normal 400 14.5px/20px 'Liberation Sans',sans-serif;color:#333;letter-spacing:0.000px;transform:scaleX(0.92);transform-origin:0 0;">U</span>
<span class="t" id="t84" style="left:565.4px;top:160.42px;font:normal 400 19px/27px 'Liberation Sans',sans-serif;color:#333;letter-spacing:0.000px;transform:scaleX(0.7);transform-origin:0 0;">S</span>
<span class="t" id="t85" style="left:564.5px;top:188.03px;font:normal 400 15.5px/22px 'Liberation Sans',sans-serif;color:#333;letter-spacing:0.000px;transform:scaleX(0.9);transform-origin:0 0;">O</span>
<span class="t" id="t86" style="left:564px;top:214.98px;font:normal 400 14.5px/20px 'Liberation Sans',sans-serif;color:#444;letter-spacing:0.000px;transform:scaleX(0.95);transform-origin:0 0;">x</span>
<span class="t" id="t87" style="left:571.2px;top:217.73px;font:normal 700 8px/11px 'Liberation Sans',sans-serif;color:#3585cc;letter-spacing:0.000px;transform:scaleX(0.9);transform-origin:0 0;">2</span>
<span class="t" id="t88" style="left:564px;top:238.78px;font:normal 400 14.5px/20px 'Liberation Sans',sans-serif;color:#444;letter-spacing:0.000px;transform:scaleX(0.95);transform-origin:0 0;">x</span>
<span class="t" id="t89" style="left:571.2px;top:246.75px;font:normal 700 8.5px/12px 'Liberation Sans',sans-serif;color:#3585cc;letter-spacing:0.000px;transform:scaleX(0.9);transform-origin:0 0;">2</span>
<span class="t" id="t90" style="left:566.5px;top:265.64px;font:normal 400 19.5px/27px 'Liberation Sans',sans-serif;color:#62b0e2;letter-spacing:0.000px;transform:scaleX(0.72);transform-origin:0 0;">S</span>
<span class="t" id="t91" style="left:565.6px;top:264.94px;font:normal 400 19.5px/27px 'Liberation Sans',sans-serif;color:#22384c;letter-spacing:0.000px;-webkit-text-stroke:0.4px #22384c;transform:scaleX(0.72);transform-origin:0 0;">S</span>
<span class="t" id="t92" style="left:562.4px;top:286.75px;font:normal 700 21.5px/30px 'Liberation Sans',sans-serif;color:#ffffff;letter-spacing:0.000px;-webkit-text-stroke:1.2px #333;transform:scaleX(0.95);transform-origin:0 0;">A</span>
<span class="t" id="t93" style="left:564px;top:316.52px;font:normal 400 19px/27px 'Liberation Sans',sans-serif;color:#333;letter-spacing:0.000px;transform:scaleX(0.9);transform-origin:0 0;">A</span>
<span class="t" id="t94" style="left:563.8px;top:342.51px;font:normal 400 17px/24px 'Liberation Sans',sans-serif;color:#333;letter-spacing:0.000px;transform:scaleX(0.9);transform-origin:0 0;">A</span>
<span class="t" id="t95" style="left:563px;top:374.32px;font:normal 400 13.5px/19px 'Liberation Sans',sans-serif;color:#1e4f8c;letter-spacing:0.000px;transform:scaleX(0.8);transform-origin:0 0;">AB</span>
<span class="t" id="t96" style="left:562.5px;top:398.78px;font:normal 400 14.5px/20px 'Liberation Sans',sans-serif;color:#555;letter-spacing:0.000px;transform:scaleX(0.88);transform-origin:0 0;">ab</span>
<span class="t" id="t97" style="left:561.8px;top:526.75px;font:normal 400 14px/20px 'Liberation Sans',sans-serif;color:#555;letter-spacing:0.000px;transform:scaleX(0.88);transform-origin:0 0;">A</span>
<span class="t" id="t98" style="left:570.6px;top:530.46px;font:normal 400 10.5px/15px 'Liberation Sans',sans-serif;color:#555;letter-spacing:0.000px;transform:scaleX(0.82);transform-origin:0 0;">B</span>
</body></html>
